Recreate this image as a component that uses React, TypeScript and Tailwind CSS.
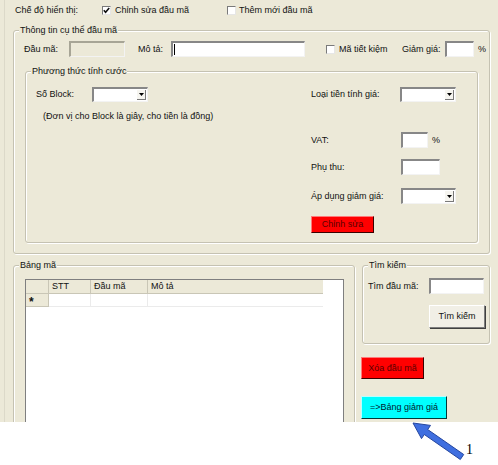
import React from "react";

function Group({ label, className, children }: { label: string; className: string; children?: React.ReactNode }) {
  return (
    <div className={`relative shrink-0 border border-[#C5C2B2] rounded-[3px] shadow-[inset_1px_1px_0_#ffffff,1px_1px_0_#ffffff] ${className}`}>
      <span className="absolute left-[5px] top-[-7px] px-[1px] bg-[#ECE9D8] leading-[12px] whitespace-nowrap">{label}</span>
      {children}
    </div>
  );
}

function TextBox({ className, children }: { className: string; children?: React.ReactNode }) {
  return (
    <div
      className={`shrink-0 h-[16px] flex items-center border-t-2 border-l-2 border-t-[#878787] border-l-[#878787] border-r border-b border-r-[#f3f3f3] border-b-[#f3f3f3] ${className}`}
    >
      {children}
    </div>
  );
}

function Combo({ className }: { className: string }) {
  return (
    <div
      className={`shrink-0 bg-white flex justify-end border-t-2 border-l-2 border-t-[#878787] border-l-[#878787] border-r border-b border-r-[#f3f3f3] border-b-[#f3f3f3] p-[1px] ${className}`}
    >
      <div className="w-[9px] h-full bg-[#f6f5f0] border-r border-b border-[#7a7a7a] flex items-center justify-center">
        <svg width="5" height="3" viewBox="0 0 5 3">
          <path d="M0 0H5L2.5 3Z" fill="#000" />
        </svg>
      </div>
    </div>
  );
}

function CheckBox({ checked }: { checked?: boolean }) {
  return (
    <div className="shrink-0 w-[9px] h-[9px] bg-white border-t border-l border-t-[#7a7a7a] border-l-[#7a7a7a] border-r border-b border-r-[#e6e6e6] border-b-[#e6e6e6] flex items-center justify-center">
      {checked && (
        <svg width="7" height="7" viewBox="0 0 7 7">
          <path d="M0.8 3.2L2.6 5.2L6.2 1" fill="none" stroke="#111" strokeWidth="1.6" />
        </svg>
      )}
    </div>
  );
}

export default function App() {
  return (
    <div className="relative w-[498px] h-[465px] bg-white text-[9px] leading-[11px] text-[#111] font-['Liberation_Sans',Arial,sans-serif] overflow-hidden">
      <div className="h-[422px] bg-[#ECE9D8] pl-[4px] overflow-hidden">
        <div className="h-full border-l border-[#DCD9C9] flex flex-col">
          {/* top row */}
          <div className="shrink-0 h-[20px] flex items-center pl-[10px]">
            <span className="w-[87px] shrink-0">Chế độ hiển thị:</span>
            <CheckBox checked />
            <span className="ml-[4px] w-[112px] shrink-0">Chỉnh sửa đầu mã</span>
            <CheckBox />
            <span className="ml-[3px]">Thêm mới đầu mã</span>
          </div>

          {/* Thông tin cụ thể đầu mã */}
          <Group label="Thông tin cụ thể đầu mã" className="mt-[10px] ml-[8px] w-[477px] h-[224px]">
            <div className="mt-[10px] h-[16px] flex items-center pl-[10px]">
              <span className="w-[45px] shrink-0">Đầu mã:</span>
              <TextBox className="w-[56px] bg-[#ECE9D8] border-r-[#d8d5c5] border-b-[#d8d5c5] border-t-[#a7a596] border-l-[#a7a596]" />
              <span className="ml-[13px] w-[33px] shrink-0">Mô tả:</span>
              <TextBox className="w-[134px] bg-white pl-[1px]">
                <div className="w-[1px] h-[11px] bg-black" />
              </TextBox>
              <div className="ml-[21px]">
                <CheckBox />
              </div>
              <span className="ml-[4px] w-[63px] shrink-0">Mã tiết kiệm</span>
              <span className="w-[43px] shrink-0">Giảm giá:</span>
              <TextBox className="w-[29px] bg-white" />
              <span className="ml-[4px]">%</span>
            </div>

            {/* Phương thức tính cước */}
            <Group label="Phương thức tính cước" className="ml-[11px] mt-[14px] w-[453px] h-[172px]">
              <div className="flex">
                <div className="w-[285px] shrink-0 pl-[10px]">
                  <div className="mt-[15px] h-[15px] flex items-center">
                    <span className="w-[56px] shrink-0">Số Block:</span>
                    <Combo className="w-[56px] h-[15px]" />
                  </div>
                  <div className="mt-[9px] pl-[7px] whitespace-nowrap">(Đơn vị cho Block là giây, cho tiền là đồng)</div>
                </div>
                <div className="flex flex-col">
                  <div className="mt-[15px] h-[15px] flex items-center">
                    <span className="w-[89px] shrink-0">Loại tiền tính giá:</span>
                    <Combo className="w-[56px] h-[15px]" />
                  </div>
                  <div className="mt-[30px] h-[16px] flex items-center">
                    <span className="w-[90px] shrink-0">VAT:</span>
                    <TextBox className="w-[27px] bg-white" />
                    <span className="ml-[4px]">%</span>
                  </div>
                  <div className="mt-[11px] h-[16px] flex items-center">
                    <span className="w-[90px] shrink-0">Phụ thu:</span>
                    <TextBox className="w-[39px] bg-white" />
                  </div>
                  <div className="mt-[13px] h-[16px] flex items-center">
                    <span className="w-[90px] shrink-0">Áp dụng giảm giá:</span>
                    <Combo className="w-[55px] h-[16px]" />
                  </div>
                  <div className="mt-[12px] w-[63px] h-[17px] bg-[#FF0000] border border-t-[#ff7a7a] border-l-[#ff7a7a] border-r-[#3a0000] border-b-[#3a0000] flex items-center justify-center text-[#5a0000]">
                    Chỉnh sửa
                  </div>
                </div>
              </div>
            </Group>
          </Group>

          {/* bottom */}
          <div className="mt-[11px] ml-[8px] flex items-start shrink-0">
            <Group label="Bảng mã" className="w-[342px] h-[200px]">
              <div className="ml-[11px] mt-[13px] w-[319px] h-[200px] bg-white border-l border-t border-r border-[#7f7f7f]">
                <div className="flex h-[14px]">
                  <div className="w-[23px] bg-[#ECE9D8] border-r border-b border-[#c9c6b6]" />
                  <div className="w-[42px] bg-[#ECE9D8] border-r border-b border-[#c9c6b6] pl-[3px] flex items-center">STT</div>
                  <div className="w-[57px] bg-[#ECE9D8] border-r border-b border-[#c9c6b6] pl-[3px] flex items-center">Đầu mã</div>
                  <div className="w-[175px] bg-[#ECE9D8] border-b border-[#c9c6b6] pl-[3px] flex items-center">Mô tả</div>
                </div>
                <div className="flex h-[13px]">
                  <div className="w-[23px] bg-[#ECE9D8] border-r border-b border-[#c9c6b6] pl-[3px] flex items-center text-[12px] font-bold leading-[12px] pt-[3px]">*</div>
                  <div className="w-[42px] border-r border-b border-[#ebebeb]" />
                  <div className="w-[57px] border-r border-b border-[#ebebeb]" />
                  <div className="w-[175px] border-b border-[#ebebeb]" />
                </div>
              </div>
            </Group>

            <div className="ml-[7px] flex flex-col shrink-0">
              <Group label="Tìm kiếm" className="w-[128px] h-[79px]">
                <div className="mt-[12px] h-[16px] pl-[5px] flex items-center">
                  <span className="w-[61px] shrink-0">Tìm đầu mã:</span>
                  <TextBox className="w-[55px] bg-white" />
                </div>
                <div className="mt-[11px] ml-[66px] w-[56px] h-[23px] bg-[#F1EFE6] border border-t-white border-l-white border-r-[#7d7d7d] border-b-[#7d7d7d] shadow-[1px_1px_0_#404040] flex items-center justify-center">
                  Tìm kiếm
                </div>
              </Group>
              <div className="mt-[13px] ml-[-1px] w-[63px] h-[22px] bg-[#FF0000] border border-t-[#ff7a7a] border-l-[#ff7a7a] border-r-[#3a0000] border-b-[#3a0000] flex items-center justify-center text-[#5a0000]">
                Xóa đầu mã
              </div>
              <div className="mt-[17px] ml-[-1px] w-[86px] h-[23px] bg-[#00FFFF] border border-t-[#b8ffff] border-l-[#b8ffff] border-r-[#003838] border-b-[#003838] flex items-center justify-center text-[#002030]">
                =&gt;Bảng giảm giá
              </div>
            </div>
          </div>
        </div>
      </div>

      {/* annotation arrow */}
      <svg className="absolute left-0 top-0 pointer-events-none" width="498" height="465" viewBox="0 0 498 465">
        <polygon
          points="413,423 430.5,425.4 427.7,429.5 463.7,454.5 460.3,459.5 424.3,434.5 421.5,438.6"
          fill="#3F6FE0"
          stroke="#24469F"
          strokeWidth="1"
          strokeLinejoin="round"
        />
      </svg>
      <span className="absolute left-[466px] top-[443px] text-[14px] leading-[14px] text-black font-['Liberation_Serif','Times_New_Roman',serif]">1</span>
    </div>
  );
}
